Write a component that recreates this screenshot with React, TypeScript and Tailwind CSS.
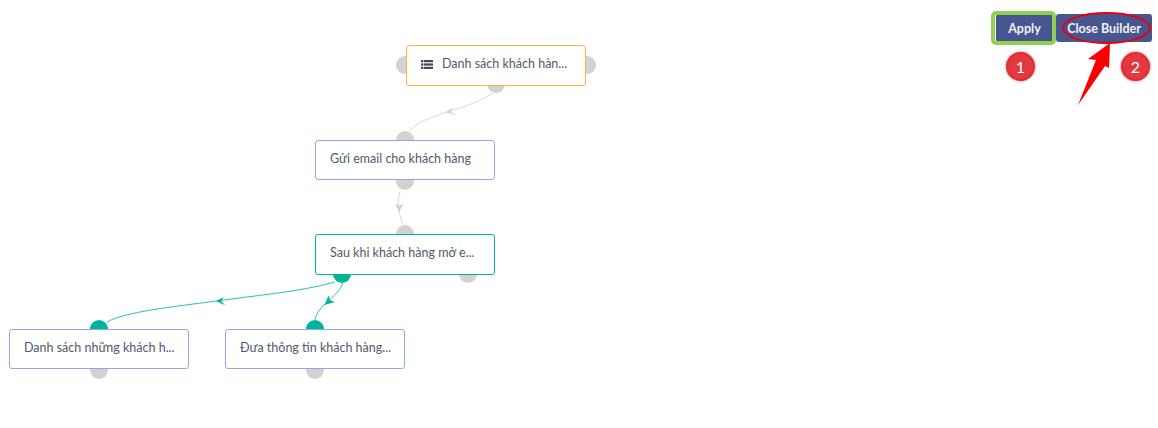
const nodes = [
  { label: "Danh sách khách hàn...", x: 406, y: 45, h: 41, border: "border-[#f3b53f]", icon: true },
  { label: "Gửi email cho khách hàng", x: 315, y: 140, h: 40, border: "border-[#8fa8ea]" },
  { label: "Sau khi khách hàng mở e...", x: 315, y: 234, h: 41, border: "border-[#00b39b]" },
  { label: "Danh sách những khách h...", x: 9, y: 329, h: 40, border: "border-[#8fa8ea]" },
  { label: "Đưa thông tin khách hàng...", x: 225, y: 329, h: 40, border: "border-[#8fa8ea]" },
];

const ports = [
  { x: 405, y: 65, c: "#d2d2d2" },
  { x: 587, y: 65, c: "#d2d2d2" },
  { x: 496, y: 84, c: "#d2d2d2" },
  { x: 405, y: 140, c: "#d2d2d2" },
  { x: 405, y: 181, c: "#d2d2d2" },
  { x: 405, y: 234, c: "#d2d2d2" },
  { x: 468, y: 274, c: "#d2d2d2" },
  { x: 342, y: 274, c: "#00b39b" },
  { x: 99, y: 329, c: "#00b39b" },
  { x: 99, y: 370, c: "#d2d2d2" },
  { x: 315, y: 329, c: "#00b39b" },
  { x: 315, y: 370, c: "#d2d2d2" },
];

function Badge({ n, x }: { n: number; x: number }) {
  return (
    <div
      className="absolute top-[52px] flex h-[29px] w-[29px] items-center justify-center rounded-full border-2 border-[#f0262e] bg-[#e0393f] text-[16px] text-white shadow-[0_0_3px_rgba(0,0,0,0.45)]"
      style={{ left: x }}
    >
      {n}
    </div>
  );
}

export default function App() {
  return (
    <div className="relative h-[428px] w-[1158px] overflow-hidden bg-white font-['Lato',sans-serif]">
      {/* Toolbar */}
      <div className="flex justify-end pt-[14px] pr-[6px]">
        <button className="h-[28px] w-[57px] rounded-[3px] bg-[#475690] pt-[2px] text-[12.5px] font-bold text-[#f2f3f8]">Apply</button>
        <button className="ml-[3px] h-[28px] w-[96px] rounded-[3px] bg-[#475690] pt-[2px] text-[12.5px] font-bold text-[#f2f3f8]">Close Builder</button>
      </div>

      {/* Edges and ports */}
      <svg className="absolute inset-0" width="1158" height="428" fill="none">
        {ports.map((p, i) => (
          <circle key={i} cx={p.x} cy={p.y} r="9" fill={p.c} />
        ))}
        <path d="M493 93C480 102 460 108 447 112C430 118 416 122 410 131" stroke="#d8d8d8" />
        <path d="M446 112L453 107.5L451 112L456 115.5Z" fill="#cfcfcf" />
        <path d="M400 192C398 200 398 206 399 211C400 216 401 220 403 225" stroke="#d8d8d8" />
        <path d="M399 212L395 203.5L399 206L403.5 203.5Z" fill="#cfcfcf" />
        <path d="M335 282C300 292 250 296 217 301C170 307 125 312 107 322" stroke="#2cc0ab" />
        <path d="M216 301L224 297L221 301L225.5 305.5Z" fill="#00b39b" />
        <path d="M343 283C338 295 330 298 325 304C320 309 316 314 315 320" stroke="#2cc0ab" />
        <path d="M324.5 305L328.5 295.5L330 300L335 302Z" fill="#00b39b" />
      </svg>

      {/* Nodes */}
      {nodes.map((n) => (
        <div
          key={n.label}
          className={`absolute flex w-[180px] items-center rounded-[3px] border bg-white pb-[2px] pl-[14px] text-[12.5px] text-[#4f5b6b] ${n.border}`}
          style={{ left: n.x, top: n.y, height: n.h }}
        >
          {n.icon && (
            <svg className="mr-[9px] shrink-0" width="12" height="9" viewBox="0 0 12 9" fill="#3f4b5b">
              <rect x="0" y="0" width="2.4" height="2.2" />
              <rect x="3" y="0" width="9" height="2.2" />
              <rect x="0" y="3.4" width="2.4" height="2.2" />
              <rect x="3" y="3.4" width="9" height="2.2" />
              <rect x="0" y="6.8" width="2.4" height="2.2" />
              <rect x="3" y="6.8" width="9" height="2.2" />
            </svg>
          )}
          <span className="whitespace-nowrap">{n.label}</span>
        </div>
      ))}

      {/* Annotations */}
      <div className="absolute left-[991px] top-[11px] h-[34px] w-[65px] rounded-[5px] border-[4px] border-[#8fd14f]" />
      <svg className="absolute inset-0" width="1158" height="428" fill="none">
        <ellipse cx="1106.5" cy="28" rx="43.5" ry="15" stroke="#e8000f" strokeWidth="2" />
        <path d="M1110 43L1088 59L1096 60L1078 105L1105 66L1109 68Z" fill="#fa0000" />
      </svg>
      <Badge n={1} x={1006} />
      <Badge n={2} x={1121} />
    </div>
  );
}
